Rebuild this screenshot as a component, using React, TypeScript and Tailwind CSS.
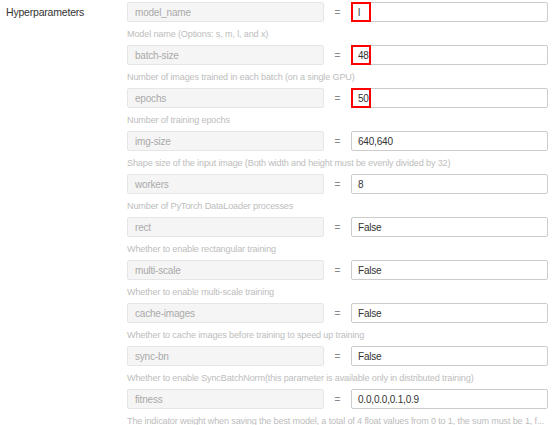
import React from "react";

type Row = { key: string; value: string; desc: string; mark?: boolean };

const rows: Row[] = [
  { key: "model_name", value: "l", desc: "Model name (Options: s, m, l, and x)", mark: true },
  { key: "batch-size", value: "48", desc: "Number of images trained in each batch (on a single GPU)", mark: true },
  { key: "epochs", value: "50", desc: "Number of training epochs", mark: true },
  { key: "img-size", value: "640,640", desc: "Shape size of the input image (Both width and height must be evenly divided by 32)" },
  { key: "workers", value: "8", desc: "Number of PyTorch DataLoader processes" },
  { key: "rect", value: "False", desc: "Whether to enable rectangular training" },
  { key: "multi-scale", value: "False", desc: "Whether to enable multi-scale training" },
  { key: "cache-images", value: "False", desc: "Whether to cache images before training to speed up training" },
  { key: "sync-bn", value: "False", desc: "Whether to enable SyncBatchNorm(this parameter is available only in distributed training)" },
  { key: "fitness", value: "0.0,0.0,0.1,0.9", desc: "The indicator weight when saving the best model, a total of 4 float values from 0 to 1, the sum must be 1, f..." },
];

export default function App() {
  return (
    <div
      className="w-[554px] h-[425px] bg-white overflow-hidden flex"
      style={{ fontFamily: '"Liberation Sans", Arial, sans-serif' }}
    >
      <div className="w-[127px] shrink-0 pl-[6px] pt-[6px] text-[10.5px] leading-[13px] text-[#333] tracking-[-0.2px]">
        Hyperparameters
      </div>
      <div className="flex flex-col pt-[2px]">
        {rows.map((r) => (
          <div key={r.key} className="flex flex-col">
            <div className="flex items-center h-[20px]">
              <div className="w-[197px] h-[20px] bg-[#f5f5f5] border border-[#e6e6e6] rounded-[2px] flex items-center pl-[7px] text-[10px] text-[#aaa] tracking-[-0.2px]">
                {r.key}
              </div>
              <div className="w-[27px] text-center text-[10px] text-[#888]">=</div>
              <div className="relative w-[197px] h-[20px] border border-[#ccc] rounded-[2px] flex items-center pl-[6px] text-[10px] text-[#333] tracking-[-0.2px]">
                {r.value}
                {r.mark && (
                  <div className="absolute left-[-1px] top-[-1px] w-[20px] h-[20px] border-2 border-[#f00]" />
                )}
              </div>
            </div>
            <div className="h-[23px] pt-[5px] text-[9.1px] leading-[14px] text-[#bdbdbd] whitespace-nowrap tracking-[-0.15px]">
              {r.desc}
            </div>
          </div>
        ))}
      </div>
    </div>
  );
}
